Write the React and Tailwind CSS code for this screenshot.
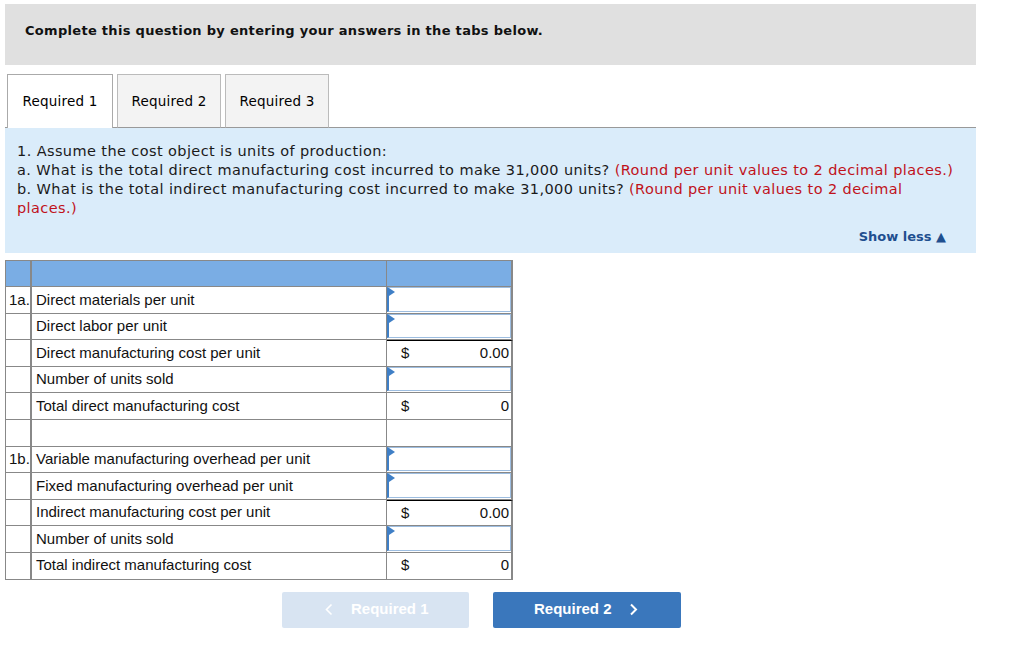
import React from "react";

const V = { fontFamily: '"DejaVu Sans", Verdana, sans-serif' };
const A = { fontFamily: '"Liberation Sans", Arial, sans-serif' };

function InputBox() {
  return (
    <div className="relative h-full w-full border border-[#9dbde0] border-l-2 border-l-[#3f7fc6] bg-white">
      <div className="absolute left-0 top-0 h-0 w-0 border-t-[4px] border-b-[4px] border-l-[6px] border-t-transparent border-b-transparent border-l-[#3f7fc6]" />
    </div>
  );
}

const rows = [
  { lbl: "1a.", text: "Direct materials per unit", kind: "input" },
  { lbl: "", text: "Direct labor per unit", kind: "input" },
  { lbl: "", text: "Direct manufacturing cost per unit", kind: "value", val: "0.00", topBlack: true },
  { lbl: "", text: "Number of units sold", kind: "input" },
  { lbl: "", text: "Total direct manufacturing cost", kind: "value", val: "0" },
  { lbl: "", text: "", kind: "empty" },
  { lbl: "1b.", text: "Variable manufacturing overhead per unit", kind: "input" },
  { lbl: "", text: "Fixed manufacturing overhead per unit", kind: "input" },
  { lbl: "", text: "Indirect manufacturing cost per unit", kind: "value", val: "0.00", topBlack: true },
  { lbl: "", text: "Number of units sold", kind: "input" },
  { lbl: "", text: "Total indirect manufacturing cost", kind: "value", val: "0" },
];

export default function App() {
  return (
    <div className="min-h-[651px] w-[1024px] bg-white pl-[5px] pt-[4px] text-black">
      <div className="w-[971px]">
        {/* header */}
        <div className="h-[61px] bg-[#e0e0e0] pl-[20px] pt-[14px]" style={V}>
          <span className="text-[13px] font-bold leading-[20px] tracking-[0.3px] text-[#111]">
            Complete this question by entering your answers in the tabs below.
          </span>
        </div>

        {/* tabs */}
        <div className="mt-[9px] flex items-end">
          <div className="w-[2px] self-stretch border-b border-[#999]" />
          <div
            className="flex h-[54px] w-[106px] items-center justify-center border border-b-0 border-[#aaa] bg-white text-[13.5px] tracking-[0.2px]"
            style={V}
          >
            Required 1
          </div>
          <div className="w-[4px] self-stretch border-b border-[#999]" />
          <div
            className="flex h-[54px] w-[104px] items-center justify-center border border-[#bbb] border-b-[#999] bg-[#f3f3f3] text-[13.5px] tracking-[0.2px]"
            style={V}
          >
            Required 2
          </div>
          <div className="w-[4px] self-stretch border-b border-[#999]" />
          <div
            className="flex h-[54px] w-[104px] items-center justify-center border border-[#bbb] border-b-[#999] bg-[#f3f3f3] text-[13.5px] tracking-[0.2px]"
            style={V}
          >
            Required 3
          </div>
          <div className="flex-1 self-stretch border-b border-[#999]" />
        </div>

        {/* question panel */}
        <div
          className="h-[125px] bg-[#daecfa] px-[12px] pt-[14px] text-[14.5px] leading-[19px] tracking-[0.4px] text-[#1a1a1a]"
          style={V}
        >
          <p>1. Assume the cost object is units of production:</p>
          <p>
            a. What is the total direct manufacturing cost incurred to make 31,000 units?{" "}
            <span className="text-[#c0121b]">(Round per unit values to 2 decimal places.)</span>
          </p>
          <p>
            b. What is the total indirect manufacturing cost incurred to make 31,000 units?{" "}
            <span className="text-[#c0121b]">(Round per unit values to 2 decimal places.)</span>
          </p>
          <div className="mt-[9px] flex justify-end pr-[18px]">
            <span className="text-[13px] font-bold tracking-normal text-[#1f4f8f]">Show less ▲</span>
          </div>
        </div>

        {/* table */}
        <div className="mt-[7px] w-[508px] border-l border-t border-[#888] text-[15px]" style={A}>
          <div className="flex h-[26px] bg-[#7aade4]">
            <div className="w-[26px] border-b border-r-2 border-[#888]" />
            <div className="w-[355px] border-b border-r border-[#888]" />
            <div className="flex-1 border-b border-r-2 border-[#888]" />
          </div>
          {rows.map((r, i) => (
            <div key={i} className="flex h-[26.6px]">
              <div className="flex w-[26px] items-center border-b border-r-2 border-[#888] pl-[3px] text-[#111]">
                {r.lbl}
              </div>
              <div className="flex w-[355px] items-center border-b border-r border-[#888] pl-[4px] text-[#111]">
                {r.text}
              </div>
              <div
                className={
                  "flex flex-1 items-center border-b border-r-2 border-[#888] " +
                  (r.topBlack ? "border-t border-t-black" : "")
                }
              >
                {r.kind === "input" && (
                  <div className="h-full w-full pb-[1px]">
                    <InputBox />
                  </div>
                )}
                {r.kind === "value" && (
                  <div className="flex w-full items-center justify-between pl-[14px] pr-[2px] text-[#111]">
                    <span>$</span>
                    <span>{r.val}</span>
                  </div>
                )}
              </div>
            </div>
          ))}
        </div>

        {/* nav buttons */}
        <div className="mt-[12px] flex gap-[24px] pl-[277px]" style={A}>
          <div className="flex h-[36px] w-[187px] items-center rounded-[2px] bg-[#d8e4f2] pl-[43px] text-[15px] font-bold text-white">
            <svg width="8" height="13" viewBox="0 0 8 13" fill="none">
              <path d="M6.5 1.5 L1.5 6.5 L6.5 11.5" stroke="white" strokeWidth="1.6" />
            </svg>
            <span className="ml-[18px]">Required 1</span>
          </div>
          <div className="flex h-[36px] w-[188px] items-center rounded-[2px] bg-[#3a77bc] pl-[41px] text-[15px] font-bold text-white">
            <span>Required 2</span>
            <svg className="ml-[17px]" width="9" height="13" viewBox="0 0 9 13" fill="none">
              <path d="M2 1.5 L7 6.5 L2 11.5" stroke="white" strokeWidth="2" />
            </svg>
          </div>
        </div>
      </div>
    </div>
  );
}
